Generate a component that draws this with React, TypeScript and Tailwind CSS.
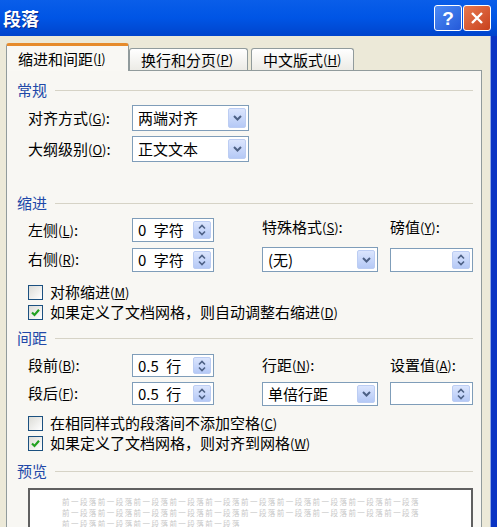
import React from "react";

const font = "font-['Noto_Sans_CJK_SC','Noto_Sans',sans-serif]";

function Mn({ k }: { k: string }) {
  return (
    <span className="text-[13px]">
      (<span className="underline">{k}</span>)
    </span>
  );
}

function Chevron() {
  return (
    <svg width="9" height="6" viewBox="0 0 9 6">
      <path d="M1 1 L4.5 4.5 L8 1" fill="none" stroke="#4d6185" strokeWidth="2" />
    </svg>
  );
}

function SpinArrows() {
  return (
    <svg width="8" height="12" viewBox="0 0 8 12">
      <path d="M1 4.5 L4 1.5 L7 4.5" fill="none" stroke="#4d6185" strokeWidth="1.6" />
      <path d="M1 7.5 L4 10.5 L7 7.5" fill="none" stroke="#4d6185" strokeWidth="1.6" />
    </svg>
  );
}

function Select({ value, w, h }: { value: string; w: string; h: string }) {
  return (
    <div className={`flex items-center border border-[#7f9db9] bg-white ${w} ${h}`}>
      <span className="flex-1 pl-[5px] leading-[18px]">{value}</span>
      <div className="w-[18px] self-stretch my-[2px] mr-[2px] rounded-[2px] border border-[#bccdf3] bg-gradient-to-b from-[#dbe5fd] to-[#b5c9f6] flex items-center justify-center">
        <Chevron />
      </div>
    </div>
  );
}

function Spin({ value, w, h }: { value: string; w: string; h: string }) {
  return (
    <div className={`flex items-center border border-[#7f9db9] bg-white ${w} ${h}`}>
      <span className="flex-1 pl-[5px] leading-[18px] whitespace-pre">{value}</span>
      <div className="w-[18px] self-stretch my-[2px] mr-[2px] rounded-[2px] border border-[#bccdf3] bg-gradient-to-b from-[#dbe5fd] to-[#b5c9f6] flex items-center justify-center">
        <SpinArrows />
      </div>
    </div>
  );
}

function Check({ on, children }: { on?: boolean; children: React.ReactNode }) {
  return (
    <div className="flex items-center h-[20px] ml-[11px]">
      <div className="w-[15px] h-[15px] border border-[#1c5180] bg-gradient-to-br from-[#dcdcd7] to-white flex items-center justify-center">
        {on && (
          <svg width="11" height="11" viewBox="0 0 11 11">
            <path d="M2 5.5 L4.5 8 L9 2.8" fill="none" stroke="#21a121" strokeWidth="2.2" />
          </svg>
        )}
      </div>
      <span className="ml-[7px] leading-[18px]">{children}</span>
    </div>
  );
}

function Header({ text, mt }: { text: string; mt: string }) {
  return (
    <div className={`flex items-center h-[20px] ${mt}`}>
      <span className="text-[#2148a8] leading-[18px]">{text}</span>
      <div className="flex-1 h-px bg-[#d6d3c6] ml-[8px]" />
    </div>
  );
}

export default function App() {
  const prev = "前一段落";
  return (
    <div className={`w-[497px] h-[527px] bg-[#ece9d8] overflow-hidden flex flex-col text-[15px] text-black ${font}`}>
      {/* title bar */}
      <div className="h-[36px] shrink-0 flex items-center bg-gradient-to-b from-[#0a5ee9] via-[#0055e5] to-[#0044cc]">
        <span className="ml-[3px] text-[18px] font-bold text-white leading-[22px] [text-shadow:1px_1px_#0a2a8a]">段落</span>
        <div className="flex-1" />
        <div className="w-[28px] h-[26px] rounded-[3px] border border-white bg-gradient-to-br from-[#4d8bf5] to-[#2559d8] flex items-center justify-center text-white text-[19px] font-bold leading-none font-['Liberation_Sans',sans-serif]">
          ?
        </div>
        <div className="w-[28px] h-[26px] ml-[1px] mr-[6px] rounded-[3px] border border-white bg-gradient-to-br from-[#e8794f] to-[#c8401c] flex items-center justify-center">
          <svg width="14" height="14" viewBox="0 0 14 14">
            <path d="M2 2 L12 12 M12 2 L2 12" stroke="white" strokeWidth="2.4" />
          </svg>
        </div>
      </div>

      <div className="flex-1 flex">
        <div className="flex-1 flex flex-col pl-[6px] pr-[8px]">
          {/* tabs */}
          <div className="h-[34px] shrink-0 flex items-end">
            <div className="relative top-[1px] z-10 w-[123px] h-[28px] rounded-t-[3px] border-x border-[#919b9c] border-t-[3px] border-t-[#e68b2c] bg-[#f9f8f4] pl-[11px] pt-[1px] flex items-center leading-[18px]">
              缩进和间距<Mn k="I" />
            </div>
            <div className="w-[119px] h-[22px] rounded-t-[3px] border border-b-0 border-[#919b9c] bg-gradient-to-b from-white to-[#ecebe6] pl-[11px] flex items-center leading-[18px]">
              换行和分页<Mn k="P" />
            </div>
            <div className="w-[103px] h-[22px] ml-[3px] rounded-t-[3px] border border-b-0 border-[#919b9c] bg-gradient-to-b from-white to-[#ecebe6] pl-[11px] flex items-center leading-[18px]">
              中文版式<Mn k="H" />
            </div>
          </div>

          {/* panel */}
          <div className="flex-1 border border-b-0 border-[#919b9c] bg-[#f8f7f3] pl-[10px] pr-[8px] flex flex-col">
            <Header text="常规" mt="mt-[9px]" />
            <div className="flex items-center h-[26px] mt-[5px] ml-[11px]">
              <span className="w-[104px] leading-[18px]">对齐方式<Mn k="G" />:</span>
              <Select value="两端对齐" w="w-[117px]" h="h-[26px]" />
            </div>
            <div className="flex items-center h-[26px] mt-[5px] ml-[11px]">
              <span className="w-[104px] leading-[18px]">大纲级别<Mn k="O" />:</span>
              <Select value="正文文本" w="w-[117px]" h="h-[26px]" />
            </div>

            <Header text="缩进" mt="mt-[31px]" />
            <div className="flex items-center h-[24px] mt-[5px] ml-[11px]">
              <div className="w-[234px] flex items-center">
                <span className="w-[104px] leading-[18px]">左侧<Mn k="L" />:</span>
                <Spin value={"0\u2002字符"} w="w-[82px]" h="h-[24px]" />
              </div>
              <span className="w-[128px] self-start leading-[18px]">特殊格式<Mn k="S" />:</span>
              <span className="self-start leading-[18px]">磅值<Mn k="Y" />:</span>
            </div>
            <div className="flex items-center h-[25px] mt-[5px] ml-[11px]">
              <div className="w-[234px] flex items-center">
                <span className="w-[104px] leading-[18px]">右侧<Mn k="R" />:</span>
                <Spin value={"0\u2002字符"} w="w-[82px]" h="h-[24px]" />
              </div>
              <div className="w-[128px]">
                <Select value="(无)" w="w-[116px]" h="h-[25px]" />
              </div>
              <Spin value="" w="w-[83px]" h="h-[24px]" />
            </div>
            <div className="mt-[10px]" />
            <Check>对称缩进<Mn k="M" /></Check>
            <Check on>如果定义了文档网格，则自动调整右缩进<Mn k="D" /></Check>

            <Header text="间距" mt="mt-[6px]" />
            <div className="flex items-center h-[23px] mt-[6px] ml-[11px]">
              <div className="w-[234px] flex items-center">
                <span className="w-[104px] leading-[18px]">段前<Mn k="B" />:</span>
                <Spin value={"0.5\u2002行"} w="w-[82px]" h="h-[23px]" />
              </div>
              <span className="w-[128px] leading-[18px]">行距<Mn k="N" />:</span>
              <span className="leading-[18px]">设置值<Mn k="A" />:</span>
            </div>
            <div className="flex items-center h-[23px] mt-[5px] ml-[11px]">
              <div className="w-[234px] flex items-center">
                <span className="w-[104px] leading-[18px]">段后<Mn k="F" />:</span>
                <Spin value={"0.5\u2002行"} w="w-[82px]" h="h-[23px]" />
              </div>
              <div className="w-[128px]">
                <Select value="单倍行距" w="w-[116px]" h="h-[24px]" />
              </div>
              <Spin value="" w="w-[83px]" h="h-[23px]" />
            </div>
            <div className="mt-[8px]" />
            <Check>在相同样式的段落间不添加空格<Mn k="C" /></Check>
            <Check on>如果定义了文档网格，则对齐到网格<Mn k="W" /></Check>

            <Header text="预览" mt="mt-[8px]" />
            <div className="mt-[7px] ml-[11px] h-[42px] border-2 border-b-0 border-[#606060] bg-white pl-[32px] pt-[6px] text-[7.5px] tracking-[1.45px] leading-[11px] text-[#c8c8c8]">
              <div>{prev.repeat(10)}</div>
              <div>{prev.repeat(10)}</div>
              <div>{prev.repeat(5)}</div>
            </div>
          </div>
        </div>
        {/* right window frame */}
        <div className="w-[7px] shrink-0 bg-[#0a34c4] border-l border-[#8ea6e6]" />
      </div>
    </div>
  );
}
